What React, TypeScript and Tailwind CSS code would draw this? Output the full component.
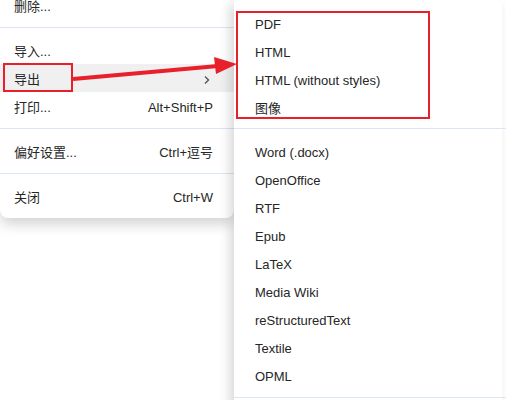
import React from "react";

const font = "font-['Liberation_Sans','Noto_Sans_CJK_SC',sans-serif]";

function Row({ label, shortcut, active, sub }: { label: string; shortcut?: string; active?: boolean; sub?: boolean }) {
  return (
    <div className={`flex h-[28px] items-center justify-between pl-[14px] pr-[21px] pt-[3px] ${active ? "bg-[#f0f0f0]" : ""}`}>
      <span>{label}</span>
      {shortcut && <span>{shortcut}</span>}
      {sub && (
        <svg width="8" height="10" viewBox="0 0 8 10" className="mr-[2px]">
          <path d="M2 1.5 L5.5 5 L2 8.5" fill="none" stroke="#555" strokeWidth="1.4" />
        </svg>
      )}
    </div>
  );
}

const Sep = () => <div className="h-px bg-[#dbe5f3]" />;

export default function App() {
  const top = ["PDF", "HTML", "HTML (without styles)", "图像"];
  const rest = ["Word (.docx)", "OpenOffice", "RTF", "Epub", "LaTeX", "Media Wiki", "reStructuredText", "Textile", "OPML"];

  return (
    <div className={`relative h-[400px] w-[506px] overflow-hidden bg-white text-[13px] text-[#262626] ${font}`}>
      {/* main menu */}
      <div className="absolute left-0 top-[-17px] w-[234px] rounded-b-[8px] bg-white shadow-[0_6px_14px_rgba(0,0,0,0.18)]">
        <div className="py-[8px]">
          <Row label="删除..." />
        </div>
        <Sep />
        <div className="py-[8px]">
          <Row label="导入..." />
          <Row label="导出" active sub />
          <Row label="打印..." shortcut="Alt+Shift+P" />
        </div>
        <Sep />
        <div className="py-[8px]">
          <Row label="偏好设置..." shortcut="Ctrl+逗号" />
        </div>
        <Sep />
        <div className="py-[8px]">
          <Row label="关闭" shortcut="Ctrl+W" />
        </div>
      </div>

      {/* submenu */}
      <div className="absolute left-[234px] top-0 w-[268px] rounded-tr-[6px] bg-white shadow-[-4px_4px_12px_rgba(0,0,0,0.16)]">
        <div className="pt-[9px] pb-[7px]">
          {top.map((t) => (
            <div key={t} className="flex h-[28px] items-center pl-[21px] pt-[3px]">{t}</div>
          ))}
        </div>
        <div className="h-px w-[300px] bg-[#dbe5f3]" />
        <div className="py-[8px]">
          {rest.map((t) => (
            <div key={t} className="flex h-[28px] items-center pl-[21px] pt-[3px]">{t}</div>
          ))}
        </div>
        <div className="h-px w-[300px] bg-[#dbe5f3]" />
        <div className="h-[20px]" />
      </div>

      {/* annotations */}
      <div className="absolute left-[3px] top-[63px] h-[29px] w-[70px] border-2 border-[#e8202a]" />
      <div className="absolute left-[236px] top-[11px] h-[108px] w-[194px] border-2 border-[#e8202a]" />
      <svg className="absolute left-0 top-0" width="506" height="400" viewBox="0 0 506 400">
        <path d="M73 79 L218 66" stroke="#e8202a" strokeWidth="4" />
        <path d="M214 57 L237 64 L216 74 Z" fill="#e8202a" />
      </svg>
    </div>
  );
}
